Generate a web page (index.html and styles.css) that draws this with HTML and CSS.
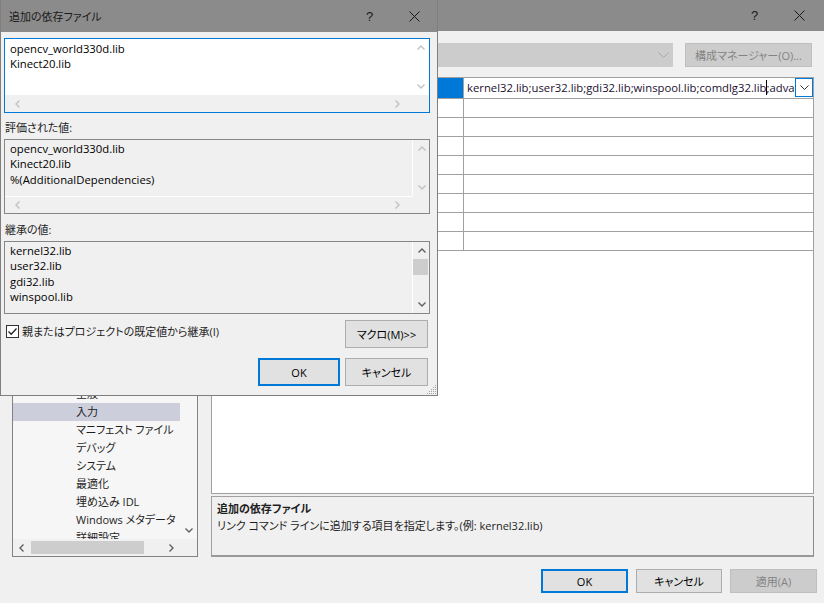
FILE: index.html
```html
<!DOCTYPE html>
<html lang="ja">
<head>
<meta charset="utf-8">
<title>追加の依存ファイル</title>
<link rel="stylesheet" href="styles.css">
</head>
<body>
<div class="win">
  <div class="titlebar">
    <span class="title"></span>
    <span class="cap-btn help">?</span>
    <span class="cap-btn"><svg width="11" height="11" viewBox="0 0 11 11"><path d="M0.5 0.5 L10.5 10.5 M10.5 0.5 L0.5 10.5" stroke="#1a1a1a" stroke-width="1" fill="none"/></svg></span>
  </div>
  <div class="toolbar">
    <div class="combo"><svg width="11" height="6" viewBox="0 0 11 6"><path d="M0.5 0.5 L5.5 5.5 L10.5 0.5" stroke="#a8a8a8" fill="none"/></svg></div>
    <div class="btn btn-disabled cfg">構成マネージャー(O)...</div>
  </div>
  <div class="main">
    <div class="tree">
      <div class="tree-list">
        <div class="tree-item">全般</div>
        <div class="tree-item sel">入力</div>
        <div class="tree-item">マニフェスト ファイル</div>
        <div class="tree-item">デバッグ</div>
        <div class="tree-item">システム</div>
        <div class="tree-item">最適化</div>
        <div class="tree-item">埋め込み IDL</div>
        <div class="tree-item">Windows メタデータ</div>
        <div class="tree-item">詳細設定</div>
      </div>
      <div class="tree-vs">
        <span class="sb-btn dark"><svg width="8" height="5" viewBox="0 0 8 5"><path d="M0.5 0.5 L4 4 L7.5 0.5" stroke="currentColor" stroke-width="1.4" fill="none"/></svg></span>
      </div>
      <div class="tree-hs">
        <span class="sb-btn dark"><svg width="5" height="8" viewBox="0 0 5 8"><path d="M4.5 0.5 L1 4 L4.5 7.5" stroke="currentColor" stroke-width="1.4" fill="none"/></svg></span>
        <span class="thumb-h"></span>
        <span class="sb-fill"></span>
        <span class="sb-btn dark"><svg width="5" height="8" viewBox="0 0 5 8"><path d="M0.5 0.5 L4 4 L0.5 7.5" stroke="currentColor" stroke-width="1.4" fill="none"/></svg></span>
      </div>
      <div class="tree-corner"></div>
    </div>
    <div class="right">
      <div class="props">
        <div class="prow first">
          <div class="pname sel">追加の依存ファイル</div>
          <div class="pval">
            <span class="edit-text">kernel32.lib;user32.lib;gdi32.lib;winspool.lib;comdlg32.lib<span class="caret"></span>;advapi32.lib;shell32.lib;ole32.lib</span>
            <span class="dd"><svg width="9" height="5" viewBox="0 0 9 5"><path d="M0.5 0.5 L4.5 4.5 L8.5 0.5" stroke="#333" fill="none"/></svg></span>
          </div>
        </div>
        <div class="prow"><div class="pname">すべての既定のライブラリの無視</div><div class="pval"></div></div>
        <div class="prow"><div class="pname">特定の既定のライブラリの無視</div><div class="pval"></div></div>
        <div class="prow"><div class="pname">モジュール定義ファイル</div><div class="pval"></div></div>
        <div class="prow"><div class="pname">アセンブリへのモジュールの追加</div><div class="pval"></div></div>
        <div class="prow"><div class="pname">マネージ リソース ファイルの埋め込み</div><div class="pval"></div></div>
        <div class="prow"><div class="pname">シンボル参照の強制</div><div class="pval"></div></div>
        <div class="prow"><div class="pname">遅延読み込みされた DLL</div><div class="pval"></div></div>
        <div class="prow"><div class="pname">アセンブリ リンク リソース</div><div class="pval"></div></div>
      </div>
      <div class="desc">
        <div class="desc-title">追加の依存ファイル</div>
        <div class="desc-text">リンク コマンド ラインに追加する項目を指定します。(例: kernel32.lib)</div>
      </div>
    </div>
  </div>
  <div class="footer">
    <div class="btn btn-default fbtn">OK</div>
    <div class="btn fbtn">キャンセル</div>
    <div class="btn btn-disabled fbtn">適用(A)</div>
  </div>
</div>

<div class="dlg">
  <div class="titlebar dlg-title">
    <span class="title">追加の依存ファイル</span>
    <span class="cap-btn help">?</span>
    <span class="cap-btn"><svg width="11" height="11" viewBox="0 0 11 11"><path d="M0.5 0.5 L10.5 10.5 M10.5 0.5 L0.5 10.5" stroke="#1a1a1a" stroke-width="1" fill="none"/></svg></span>
  </div>
  <div class="dlg-body">
    <div class="box box-edit">
      <div class="box-text">opencv_world330d.lib<br>Kinect20.lib</div>
      <div class="vs vs-white">
        <span class="sb-btn light"><svg width="8" height="5" viewBox="0 0 8 5"><path d="M0.5 4.5 L4 1 L7.5 4.5" stroke="currentColor" stroke-width="1.4" fill="none"/></svg></span>
        <span class="sb-btn light"><svg width="8" height="5" viewBox="0 0 8 5"><path d="M0.5 0.5 L4 4 L7.5 0.5" stroke="currentColor" stroke-width="1.4" fill="none"/></svg></span>
      </div>
      <div class="hs">
        <span class="sb-btn light"><svg width="5" height="8" viewBox="0 0 5 8"><path d="M4.5 0.5 L1 4 L4.5 7.5" stroke="currentColor" stroke-width="1.4" fill="none"/></svg></span>
        <span class="sb-btn light"><svg width="5" height="8" viewBox="0 0 5 8"><path d="M0.5 0.5 L4 4 L0.5 7.5" stroke="currentColor" stroke-width="1.4" fill="none"/></svg></span>
      </div>
      <div class="corner"></div>
    </div>

    <div class="label label-1">評価された値:</div>
    <div class="box box-ro">
      <div class="box-text">opencv_world330d.lib<br>Kinect20.lib<br>%(AdditionalDependencies)</div>
      <div class="vs vs-ro">
        <span class="sb-btn light"><svg width="8" height="5" viewBox="0 0 8 5"><path d="M0.5 4.5 L4 1 L7.5 4.5" stroke="currentColor" stroke-width="1.4" fill="none"/></svg></span>
        <span class="sb-btn light"><svg width="8" height="5" viewBox="0 0 8 5"><path d="M0.5 0.5 L4 4 L7.5 0.5" stroke="currentColor" stroke-width="1.4" fill="none"/></svg></span>
      </div>
      <div class="hs hs-ro">
        <span class="sb-btn light"><svg width="5" height="8" viewBox="0 0 5 8"><path d="M4.5 0.5 L1 4 L4.5 7.5" stroke="currentColor" stroke-width="1.4" fill="none"/></svg></span>
        <span class="sb-btn light"><svg width="5" height="8" viewBox="0 0 5 8"><path d="M0.5 0.5 L4 4 L0.5 7.5" stroke="currentColor" stroke-width="1.4" fill="none"/></svg></span>
      </div>
      <div class="corner"></div>
    </div>

    <div class="label label-2">継承の値:</div>
    <div class="box box-ro box-inh">
      <div class="box-text">kernel32.lib<br>user32.lib<br>gdi32.lib<br>winspool.lib</div>
      <div class="vs vs-ro">
        <span class="sb-btn dark"><svg width="8" height="5" viewBox="0 0 8 5"><path d="M0.5 4.5 L4 1 L7.5 4.5" stroke="currentColor" stroke-width="1.4" fill="none"/></svg></span>
        <span class="thumb-v"></span>
        <span class="sb-fill"></span>
        <span class="sb-btn dark"><svg width="8" height="5" viewBox="0 0 8 5"><path d="M0.5 0.5 L4 4 L7.5 0.5" stroke="currentColor" stroke-width="1.4" fill="none"/></svg></span>
      </div>
    </div>

    <div class="check-row">
      <label class="check">
        <span class="checkbox"><svg width="11" height="11" viewBox="0 0 11 11"><path d="M1.5 5.5 L4.2 8.2 L9.5 2.5" stroke="#222" stroke-width="1.3" fill="none"/></svg></span>
        <span>親またはプロジェクトの既定値から継承(I)</span>
      </label>
      <div class="btn dbtn">マクロ(M)&gt;&gt;</div>
    </div>

    <div class="dlg-buttons">
      <div class="btn btn-default dbtn ok">OK</div>
      <div class="btn dbtn">キャンセル</div>
    </div>
  </div>
  <svg class="grip" width="12" height="12" viewBox="0 0 12 12">
    <g fill="#a0a0a0">
      <rect x="10" y="2" width="1" height="1"/><rect x="8" y="4" width="1" height="1"/><rect x="10" y="4" width="1" height="1"/>
      <rect x="6" y="6" width="1" height="1"/><rect x="8" y="6" width="1" height="1"/><rect x="10" y="6" width="1" height="1"/>
      <rect x="4" y="8" width="1" height="1"/><rect x="6" y="8" width="1" height="1"/><rect x="8" y="8" width="1" height="1"/><rect x="10" y="8" width="1" height="1"/>
      <rect x="2" y="10" width="1" height="1"/><rect x="4" y="10" width="1" height="1"/><rect x="6" y="10" width="1" height="1"/><rect x="8" y="10" width="1" height="1"/><rect x="10" y="10" width="1" height="1"/>
    </g>
  </svg>
</div>
</body>
</html>
```

FILE: styles.css
```css
* { box-sizing: border-box; }
html, body { margin: 0; padding: 0; }
body {
  width: 824px;
  height: 603px;
  overflow: hidden;
  position: relative;
  background: #f0f0f0;
  font-family: "Open Sans", "Noto Sans CJK JP", sans-serif;
  font-size: 11px;
  color: #000;
  font-feature-settings: "palt";
}

/* ---------- background window ---------- */
.win {
  width: 824px;
  height: 603px;
  display: flex;
  flex-direction: column;
  background: #f0f0f0;
}
.titlebar {
  flex: none;
  height: 31px;
  background: #8b8b8b;
  display: flex;
  align-items: center;
  padding-left: 9px;
  padding-right: 2px;
  color: #1a1a1a;
  font-size: 11px;
}
.titlebar .title { flex: 1; white-space: nowrap; overflow: hidden; }
.cap-btn {
  width: 45px;
  height: 31px;
  display: flex;
  align-items: center;
  justify-content: center;
  flex: none;
}
.cap-btn.help { font-size: 13px; font-family: "Liberation Sans", sans-serif; }

.toolbar {
  flex: none;
  display: flex;
  justify-content: flex-end;
  gap: 12px;
  padding: 12px 12px 0 0;
  height: 36px;
}
.combo {
  width: 380px;
  height: 24px;
  background: #cccccc;
  border: 1px solid #cccccc;
  display: flex;
  align-items: center;
  justify-content: flex-end;
  padding-right: 3px;
}
.btn {
  display: flex;
  align-items: center;
  justify-content: center;
  background: #e1e1e1;
  border: 1px solid #adadad;
  color: #000;
  white-space: nowrap;
}
.btn-disabled { background: #cccccc; border-color: #bfbfbf; color: #838383; }
.btn-default { border: 2px solid #0078d7; }
.cfg { width: 127px; height: 24px; }

.main {
  flex: none;
  display: flex;
  gap: 13px;
  padding-left: 12px;
  margin-top: 10px;
  height: 480px;
}
.tree {
  width: 186px;
  height: 480px;
  border: 1px solid #828282;
  background: #f6f6f6;
  display: grid;
  grid-template-columns: 1fr 17px;
  grid-template-rows: 1fr 17px;
}
.tree-list {
  overflow: hidden;
  padding-top: 307px;
}
.tree-item {
  height: 18px;
  line-height: 18px;
  padding-left: 63px;
  white-space: nowrap;
  color: #1e1e1e;
}
.tree-item.sel { background: #cccedb; }
.tree-vs {
  display: flex;
  flex-direction: column;
  justify-content: flex-end;
}
.tree-hs {
  display: flex;
  align-items: center;
  background: #f0f0f0;
}
.tree-corner { background: #f0f0f0; }
.sb-btn {
  width: 17px;
  height: 17px;
  flex: none;
  display: flex;
  align-items: center;
  justify-content: center;
}
.sb-btn.dark { color: #606060; }
.sb-btn.light { color: #c2c2c2; }
.sb-fill { flex: 1; }
.thumb-h {
  width: 113px;
  height: 13px;
  margin-left: 1px;
  background: #cdcdcd;
  flex: none;
}

.right {
  width: 603px;
  display: flex;
  flex-direction: column;
  gap: 2px;
}
.props {
  height: 417px;
  border: 1px solid #a0a0a0;
  background: #fff;
}
.prow {
  display: flex;
  height: 19px;
  border-bottom: 1px solid #a0a0a0;
}
.prow.first { height: 21px; }
.pname {
  width: 252px;
  flex: none;
  border-right: 1px solid #a0a0a0;
  padding-left: 4px;
  white-space: nowrap;
  overflow: hidden;
  line-height: 18px;
  color: #1e1e1e;
}
.pname.sel { background: #0078d7; color: #fff; }
.pval {
  flex: 1;
  min-width: 0;
  display: flex;
  align-items: flex-start;
}
.edit-text {
  flex: 1;
  min-width: 0;
  overflow: hidden;
  white-space: nowrap;
  padding-left: 3px;
  line-height: 19px;
  font-size: 11.3px;
  color: #1b1030;
}
.caret {
  display: inline-block;
  width: 1px;
  height: 15px;
  background: #000;
  vertical-align: -3px;
  margin-right: -1px;
}
.dd {
  width: 18px;
  height: 19px;
  flex: none;
  border: 1px solid #0078d7;
  background: #fff;
  display: flex;
  align-items: center;
  justify-content: center;
}
.desc {
  height: 61px;
  border: 1px solid #a0a0a0;
  border-right-color: #8c8c8c;
  border-bottom: 2px solid #999;
  padding: 3px 5px;
  line-height: 17px;
  color: #1e1e1e;
}
.desc-title { font-weight: bold; }

.footer {
  flex: none;
  display: flex;
  justify-content: flex-end;
  gap: 8px;
  padding-right: 7px;
  margin-top: 12px;
}
.fbtn { width: 86px; height: 24px; }
.fbtn.btn-default, .fbtn.btn-disabled { width: 87px; }

/* ---------- front dialog ---------- */
.dlg {
  position: absolute;
  left: 0;
  top: 0;
  width: 438px;
  height: 396px;
  border: 1px solid #7f7f7f;
  border-top: none;
  background: #f0f0f0;
  display: flex;
  flex-direction: column;
}
.dlg-title {
  height: 32px;
  padding-left: 8px;
  padding-right: 0;
}
.dlg-body {
  padding: 0 7px 0 3px;
  display: flex;
  flex-direction: column;
}
.box {
  width: 426px;
  margin-top: 6px;
  display: grid;
  grid-template-columns: 1fr 17px;
  grid-template-rows: 1fr 17px;
}
.box-edit {
  height: 75px;
  border: 1px solid #0078d7;
  background: #fff;
}
.box-ro {
  height: 75px;
  margin-top: 4px;
  border: 1px solid #868686;
  background: #f0f0f0;
}
.box-inh {
  height: 73px;
  grid-template-rows: 1fr;
}
.box-text {
  padding: 2px 5px 0;
  line-height: 15.4px;
  font-size: 11.3px;
  white-space: nowrap;
  overflow: hidden;
  color: #000;
}
.box-ro .box-text { padding-top: 1px; }
.vs {
  display: flex;
  flex-direction: column;
  justify-content: space-between;
}
.vs-white { background: #fff; }
.vs-ro { border-left: 1px solid #fff; }
.box-inh .vs { justify-content: flex-start; }
.thumb-v {
  width: 15px;
  height: 16px;
  background: #cdcdcd;
  margin-left: 0;
  flex: none;
}
.hs {
  display: flex;
  justify-content: space-between;
  align-items: center;
  background: #f0f0f0;
  padding: 0 6px 0 4px;
}
.hs-ro { border-top: 1px solid #fff; }
.corner { background: #f0f0f0; }

.label {
  height: 15px;
  line-height: 15px;
  margin-top: 7px;
  padding-left: 1px;
  color: #1e1e1e;
}
.label-2 { margin-top: 8px; }

.check-row {
  margin-top: 6px;
  display: flex;
  justify-content: space-between;
  align-items: flex-start;
  padding-right: 2px;
}
.check {
  display: flex;
  align-items: center;
  gap: 3px;
  margin-top: 3px;
  margin-left: 2px;
  color: #1e1e1e;
}
.checkbox {
  width: 13px;
  height: 13px;
  border: 1px solid #333;
  background: #fff;
  display: flex;
  align-items: center;
  justify-content: center;
}
.dbtn { width: 83px; height: 28px; }
.dbtn.ok { width: 82px; }
.dlg-buttons {
  margin-top: 10px;
  display: flex;
  justify-content: flex-end;
  gap: 5px;
  padding-right: 2px;
}
.grip {
  position: absolute;
  right: 0;
  bottom: 0;
}
```
